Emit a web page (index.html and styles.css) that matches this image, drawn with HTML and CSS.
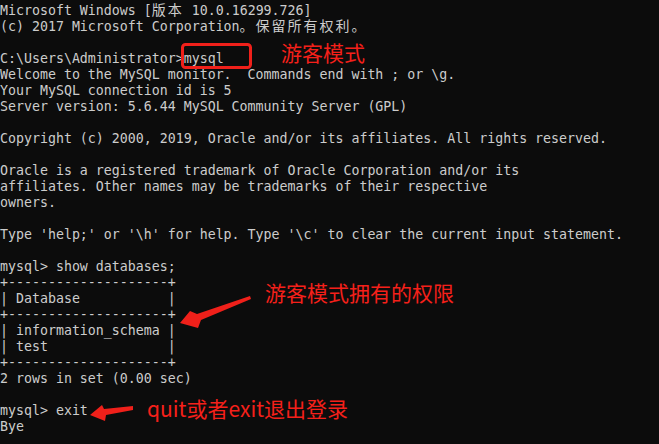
FILE: index.html
```html
<!DOCTYPE html>
<html lang="zh-CN">
<head>
<meta charset="utf-8">
<title>cmd - mysql</title>
<link rel="stylesheet" href="styles.css">
</head>
<body>
<main class="console">
<pre class="out">Microsoft Windows [<span class="cjk">版本</span> 10.0.16299.726]
(c) 2017 Microsoft Corporation<span class="cjk">。保留所有权利。</span>

C:\Users\Administrator&gt;mysql
Welcome to the MySQL monitor.  Commands end with ; or \g.
Your MySQL connection id is 5
Server version: 5.6.44 MySQL Community Server (GPL)

Copyright (c) 2000, 2019, Oracle and/or its affiliates. All rights reserved.

Oracle is a registered trademark of Oracle Corporation and/or its
affiliates. Other names may be trademarks of their respective
owners.

Type 'help;' or '\h' for help. Type '\c' to clear the current input statement.

mysql&gt; show databases;
+--------------------+
| Database           |
+--------------------+
| information_schema |
| test               |
+--------------------+
2 rows in set (0.00 sec)

mysql&gt; exit
Bye</pre>
<svg class="marks" width="659" height="444" viewBox="0 0 659 444" aria-hidden="true">
  <rect x="182.5" y="44.5" width="68" height="23" rx="3" ry="3" fill="none" stroke="#f0201a" stroke-width="3"/>
  <polygon points="180,323 190,311 197,314 250,296 251,299 201,320 198,328" fill="#f0201a"/>
  <polygon points="90,415 102,405 104,409 133,406 133,410 106,415 105,421" fill="#f0201a"/>
</svg>
<div class="note note-guest">游客模式</div>
<div class="note note-perm">游客模式拥有的权限</div>
<div class="note note-exit">quit或者exit退出登录</div>
</main>
</body>
</html>
```
FILE: styles.css
```css
html, body {
  margin: 0;
  padding: 0;
  background: #0c0c0c;
}

.console {
  position: relative;
  width: 659px;
  height: 444px;
  overflow: hidden;
  background: #0c0c0c;
}

.out {
  margin: 0;
  padding: 3px 0 0 0;
  font-family: "DejaVu Sans Mono", "Liberation Mono", monospace;
  font-size: 13.28px;
  line-height: 16px;
  color: #cccccc;
  white-space: pre;
}

.cjk {
  font-family: "Noto Sans CJK SC", sans-serif;
  font-size: 14px;
  line-height: 0;
  letter-spacing: 2px;
}

.marks {
  position: absolute;
  left: 0;
  top: 0;
}

.note {
  position: absolute;
  font-family: "Noto Sans CJK SC", sans-serif;
  font-size: 21px;
  line-height: 1;
  color: #f5201a;
  white-space: nowrap;
}

.note-guest {
  left: 281px;
  top: 42px;
}

.note-perm {
  left: 265px;
  top: 282px;
}

.note-exit {
  left: 147px;
  top: 398px;
}
```
